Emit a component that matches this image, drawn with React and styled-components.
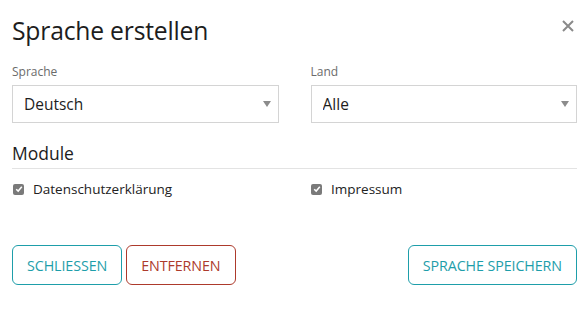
import React, { useState } from "react";
import styled, { createGlobalStyle } from "styled-components";

const GlobalStyle = createGlobalStyle`
  html, body {
    margin: 0;
    padding: 0;
    background: #fff;
  }
  body {
    font-family: "Open Sans", "Noto Sans", sans-serif;
    color: #222;
  }
`;

const TEAL = "#1e9eaa";
const RED = "#ad3a2c";

function Dialog() {
  const [sprache, setSprache] = useState("Deutsch");
  const [land, setLand] = useState("Alle");
  const [modules, setModules] = useState({ datenschutz: true, impressum: true });

  const toggle = (key) => setModules((m) => ({ ...m, [key]: !m[key] }));

  return (
    <Modal>
      <Header>
        <Title>Sprache erstellen</Title>
        <Close aria-label="Schließen">
          <svg width="12" height="12" viewBox="0 0 12 12">
            <path d="M1 1L11 11M11 1L1 11" stroke="#8a8a8a" strokeWidth="2" />
          </svg>
        </Close>
      </Header>

      <Fields>
        <Field>
          <Label>Sprache</Label>
          <SelectBox>
            <Select value={sprache} onChange={(e) => setSprache(e.target.value)}>
              <option>Deutsch</option>
              <option>Englisch</option>
            </Select>
            <Caret />
          </SelectBox>
        </Field>
        <Field>
          <Label>Land</Label>
          <SelectBox>
            <Select value={land} onChange={(e) => setLand(e.target.value)}>
              <option>Alle</option>
              <option>Deutschland</option>
            </Select>
            <Caret />
          </SelectBox>
        </Field>
      </Fields>

      <Section>Module</Section>

      <Checks>
        <Check onClick={() => toggle("datenschutz")}>
          <Box $checked={modules.datenschutz}>
            {modules.datenschutz && (
              <svg width="8" height="8" viewBox="0 0 8 8">
                <path d="M1.2 4.2L3.2 6.1L6.8 1.8" fill="none" stroke="#fff" strokeWidth="1.5" />
              </svg>
            )}
          </Box>
          Datenschutzerklärung
        </Check>
        <Check onClick={() => toggle("impressum")}>
          <Box $checked={modules.impressum}>
            {modules.impressum && (
              <svg width="8" height="8" viewBox="0 0 8 8">
                <path d="M1.2 4.2L3.2 6.1L6.8 1.8" fill="none" stroke="#fff" strokeWidth="1.5" />
              </svg>
            )}
          </Box>
          Impressum
        </Check>
      </Checks>

      <Footer>
        <Group>
          <Button $color={TEAL}>SCHLIESSEN</Button>
          <Button $color={RED}>ENTFERNEN</Button>
        </Group>
        <Button $color={TEAL}>SPRACHE SPEICHERN</Button>
      </Footer>
    </Modal>
  );
}

const Modal = styled.div`
  width: 588px;
  height: 309px;
  box-sizing: border-box;
  padding: 16px 11px 0 12px;
  display: flex;
  flex-direction: column;
`;

const Header = styled.div`
  display: flex;
  justify-content: space-between;
  align-items: flex-start;
`;

const Title = styled.h1`
  margin: 0;
  font-size: 24.7px;
  font-weight: 400;
  line-height: 30px;
  color: #1d1d1d;
  letter-spacing: -0.2px;
`;

const Close = styled.button`
  border: 0;
  background: none;
  padding: 0;
  margin: 0 -1px 0 0;
  width: 20px;
  height: 20px;
  display: flex;
  align-items: center;
  justify-content: center;
  cursor: pointer;
`;

const Fields = styled.div`
  display: grid;
  grid-template-columns: 1fr 1fr;
  column-gap: 32px;
  margin-top: 18px;
`;

const Field = styled.div`
  display: flex;
  flex-direction: column;
`;

const Label = styled.label`
  font-size: 12px;
  line-height: 16px;
  color: #6b6b6b;
  margin-bottom: 5px;
`;

const SelectBox = styled.div`
  position: relative;
  height: 38px;
  border: 1px solid #d4d4d4;
  box-sizing: border-box;
`;

const Select = styled.select`
  appearance: none;
  border: 0;
  outline: none;
  background: transparent;
  width: 100%;
  height: 100%;
  padding: 0 30px 0 11px;
  font-family: inherit;
  font-size: 15.5px;
  color: #1d1d1d;
`;

const Caret = styled.span`
  position: absolute;
  right: 7px;
  top: 15px;
  width: 0;
  height: 0;
  border-left: 4px solid transparent;
  border-right: 4px solid transparent;
  border-top: 6px solid #8c8c8c;
  pointer-events: none;
`;

const Section = styled.h2`
  margin: 18px 0 0 0;
  padding-bottom: 3px;
  font-size: 17.5px;
  font-weight: 400;
  line-height: 24px;
  color: #1d1d1d;
  border-bottom: 1px solid #e3e3e3;
`;

const Checks = styled.div`
  display: grid;
  grid-template-columns: 1fr 1fr;
  column-gap: 32px;
  margin-top: 11px;
  padding-left: 1px;
`;

const Check = styled.label`
  display: flex;
  align-items: center;
  gap: 9px;
  font-size: 13.5px;
  line-height: 18px;
  color: #222;
  cursor: pointer;
  user-select: none;
`;

const Box = styled.span`
  width: 11px;
  height: 11px;
  border-radius: 2px;
  background: ${(p) => (p.$checked ? "#7a7a7a" : "#fff")};
  border: ${(p) => (p.$checked ? "0" : "1px solid #999")};
  box-sizing: border-box;
  display: flex;
  align-items: center;
  justify-content: center;
`;

const Footer = styled.div`
  display: flex;
  justify-content: space-between;
  margin-top: 47px;
`;

const Group = styled.div`
  display: flex;
  gap: 4px;
`;

const Button = styled.button`
  height: 40px;
  padding: 0 14px;
  border: 1px solid ${(p) => p.$color};
  border-radius: 6px;
  background: #fff;
  color: ${(p) => p.$color};
  font-family: inherit;
  font-size: 14.3px;
  letter-spacing: -0.1px;
  cursor: pointer;
`;

export default function App() {
  return (
    <>
      <GlobalStyle />
      <Dialog />
    </>
  );
}
